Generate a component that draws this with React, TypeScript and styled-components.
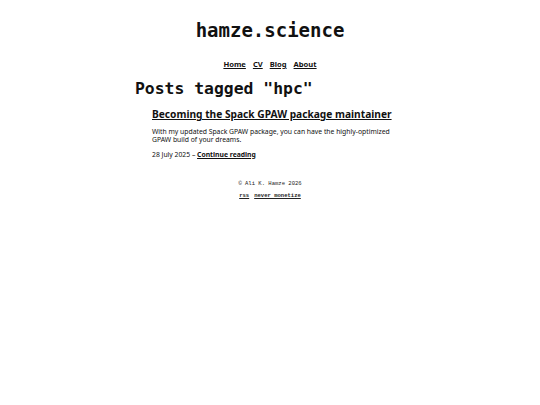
import styled, { createGlobalStyle } from "styled-components";

const Global = createGlobalStyle`
  html, body {
    margin: 0;
    padding: 0;
    background: #fff;
    color: #111;
  }
  a {
    color: #111;
  }
`;

const Page = styled.div`
  width: 540px;
  display: flex;
  flex-direction: column;
  align-items: center;
  font-family: "Noto Sans", sans-serif;
`;

const SiteTitle = styled.h1`
  margin: 18px 0 0;
  font-family: "DejaVu Sans Mono", monospace;
  font-size: 19px;
  font-weight: bold;
  line-height: 24px;
`;

const Nav = styled.nav`
  margin-top: 17px;
  display: flex;
  gap: 7px;
  font-size: 7.6px;
  font-weight: bold;
  line-height: 10px;
`;

const Main = styled.main`
  width: 270px;
  margin-top: 9px;
`;

const Heading = styled.h2`
  margin: 0;
  font-family: "DejaVu Sans Mono", monospace;
  font-size: 16.4px;
  font-weight: bold;
  line-height: 22px;
`;

const Post = styled.article`
  margin: 7px 0 0 17px;
`;

const PostTitle = styled.a`
  display: block;
  font-size: 10.2px;
  font-weight: bold;
  line-height: 15px;
`;

const Summary = styled.p`
  margin: 5.5px 0 0;
  font-size: 6.8px;
  line-height: 8px;
`;

const Meta = styled.p`
  margin: 7px 0 0;
  font-size: 6.8px;
  line-height: 8px;

  a {
    font-weight: bold;
  }
`;

const Footer = styled.footer`
  margin-top: 21px;
  display: flex;
  flex-direction: column;
  align-items: center;
  gap: 4px;
  font-family: "Liberation Mono", monospace;
  font-size: 5.55px;
  line-height: 8px;
  color: #222;
`;

const FooterLinks = styled.div`
  display: flex;
  gap: 5px;
  font-weight: bold;

  a {
    color: #222;
  }
`;

export default function App() {
  return (
    <Page>
      <Global />
      <SiteTitle>hamze.science</SiteTitle>
      <Nav>
        <a href="#">Home</a>
        <a href="#">CV</a>
        <a href="#">Blog</a>
        <a href="#">About</a>
      </Nav>
      <Main>
        <Heading>Posts tagged "hpc"</Heading>
        <Post>
          <PostTitle href="#">Becoming the Spack GPAW package maintainer</PostTitle>
          <Summary>
            With my updated Spack GPAW package, you can have the highly-optimized GPAW build of
            your dreams.
          </Summary>
          <Meta>
            28 July 2025 – <a href="#">Continue reading</a>
          </Meta>
        </Post>
      </Main>
      <Footer>
        <span>© Ali K. Hamze 2026</span>
        <FooterLinks>
          <a href="#">rss</a>
          <a href="#">never monetize</a>
        </FooterLinks>
      </Footer>
    </Page>
  );
}
